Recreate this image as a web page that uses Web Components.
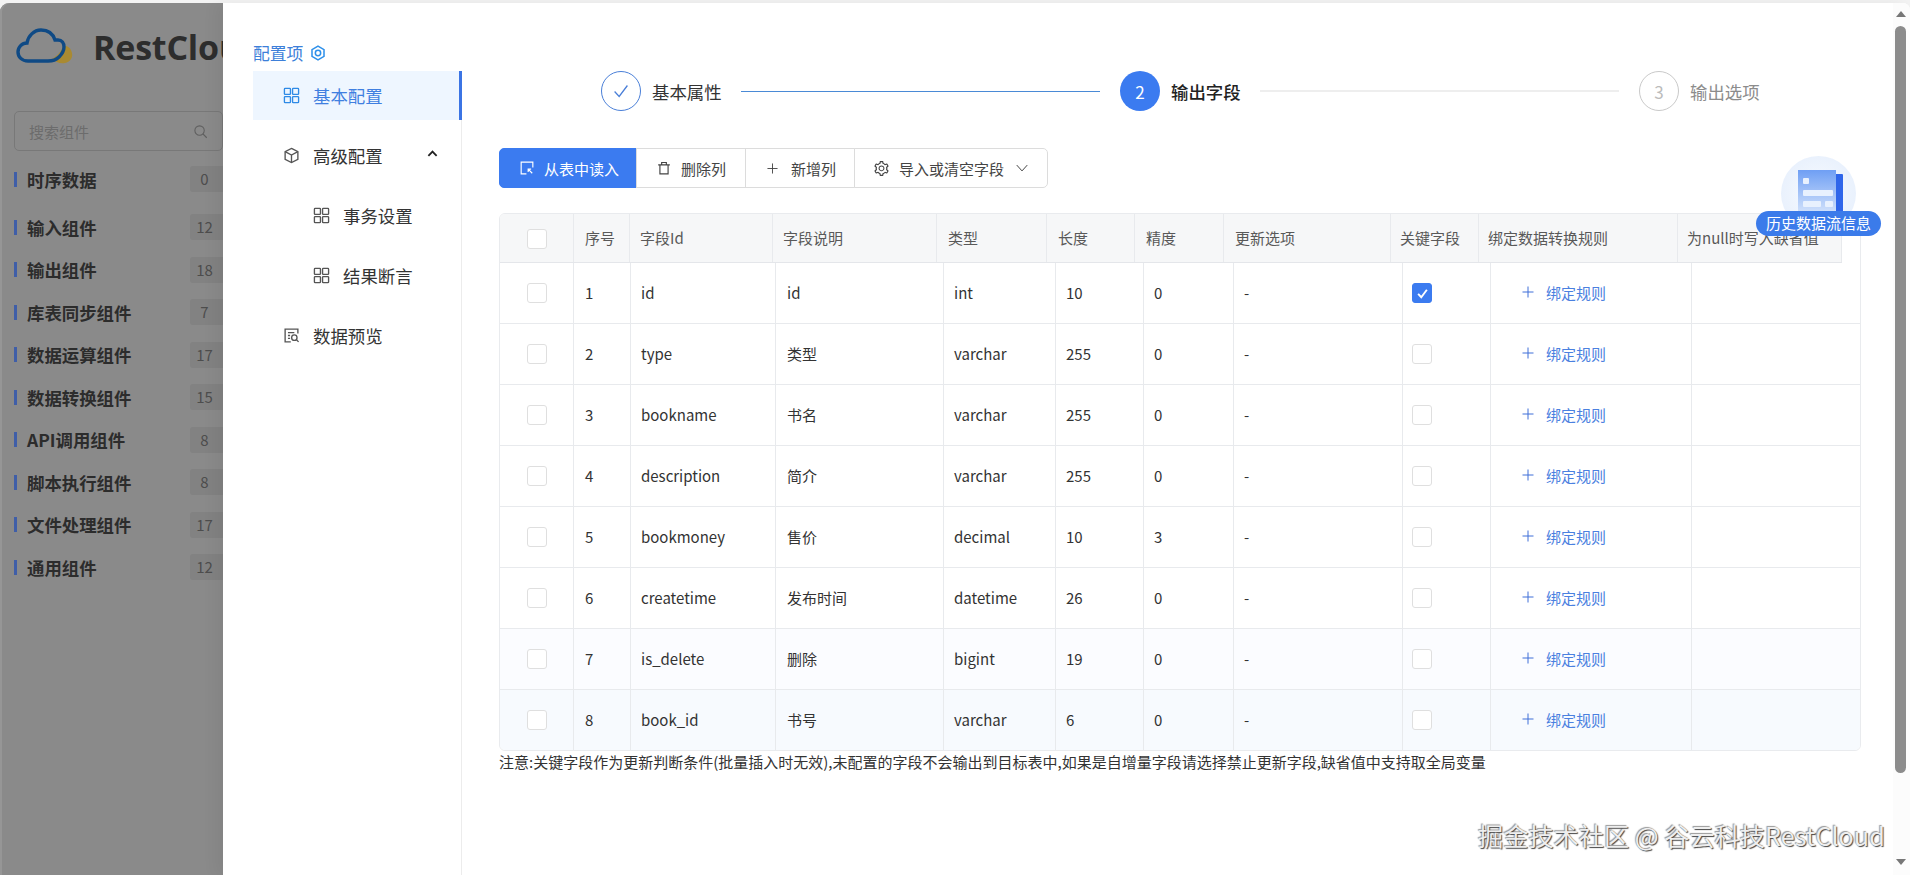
<!DOCTYPE html>
<html lang="zh">
<head>
<meta charset="utf-8">
<title>RestCloud</title>
<style>
  html, body { margin: 0; height: 100%; overflow: hidden; background: #f3f3f3; }
  body { font-family: "Noto Sans CJK SC", sans-serif; color: #333; }
  rc-app { height: 875px; }
</style>
</head>
<body>
<rc-app>
  <rc-sidebar slot="side"></rc-sidebar>
  <rc-drawer slot="main">
    <rc-menu slot="menu"></rc-menu>
    <rc-steps></rc-steps>
    <rc-toolbar></rc-toolbar>
    <rc-field-table></rc-field-table>
    <div style="font-size:15px;line-height:20px;color:#333;margin-left:37px;margin-top:1px;white-space:nowrap">注意:关键字段作为更新判断条件(批量插入时无效),未配置的字段不会输出到目标表中,如果是自增量字段请选择禁止更新字段,缺省值中支持取全局变量</div>
    <rc-scrollbar slot="scroll"></rc-scrollbar>
    <rc-history slot="over"></rc-history>
  </rc-drawer>
</rc-app>

<script>
  // shared icons, all on a 24 box unless the viewBox says otherwise
  function svg(size, body, sw) {
    return `<svg width="${size}" height="${size}" viewBox="0 0 24 24" fill="none" stroke="currentColor" stroke-width="${sw || 1.7}">${body}</svg>`;
  }
  const ICONS = {
    grid: '<rect x="2" y="2" width="8.5" height="8.5" rx="1"/><rect x="13.5" y="2" width="8.5" height="8.5" rx="1"/><rect x="2" y="13.5" width="8.5" height="8.5" rx="1"/><rect x="13.5" y="13.5" width="8.5" height="8.5" rx="1"/>',
    cube: '<path d="M12 2l9 4.600v10.800L12 22l-9-4.600V6.600z"/><path d="M3 6.600l9 4.800 9-4.800M12 11.400V22"/>',
    preview: '<path d="M21 9V3H3v18h8"/><path d="M7 8h9M7 12h3M7 16h3"/><circle cx="16" cy="15" r="3.800"/><path d="M19 18l3 3"/>',
    target: '<path d="M12 1.800l9 5.100v10.200l-9 5.100-9-5.100V6.900z"/><circle cx="12" cy="12" r="4"/>',
    up: '<path d="M3 17l9-9 9 9"/>',
    down: '<path d="M3 7l9 10 9-10"/>',
    check: '<path d="M5 12.500l5 5.500 9-12"/>',
    plus: '<path d="M12 1v22M1 12h22"/>',
    search: '<circle cx="10.500" cy="10.500" r="7.500"/><path d="M16 16l6 6"/>',
    importBox: '<path d="M22 11V2H2v20h9"/><path d="M21 21l-7-7M14 19v-5h5"/>',
    trash: '<path d="M2 6.500h20M8 6.500V2.500h8v4M5 6.500V22h14V6.500"/>'
  };
  const GEAR = '<svg width="15" height="15" viewBox="64 64 896 896" fill="currentColor"><path d="M924.8 625.7l-65.5-56c3.1-19 4.7-38.4 4.7-57.800s-1.600-38.800-4.700-57.800l65.500-56a32.030 32.030 0 0 0 9.300-35.200l-.9-2.600a443.740 443.740 0 0 0-79.700-137.900l-1.800-2.100a32.120 32.120 0 0 0-35.100-9.500l-81.300 28.900c-30-24.600-63.500-44-99.700-57.600l-15.700-85a32.050 32.050 0 0 0-25.800-25.700l-2.700-.5c-52.100-9.400-106.900-9.400-159 0l-2.700.5a32.050 32.050 0 0 0-25.800 25.700l-15.800 85.400a351.860 351.860 0 0 0-99 57.400l-81.900-29.100a32 32 0 0 0-35.100 9.500l-1.800 2.100a446.020 446.020 0 0 0-79.700 137.900l-.9 2.600c-4.500 12.500-.8 26.500 9.300 35.200l66.300 56.600c-3.100 18.800-4.600 38-4.600 57.100 0 19.200 1.500 38.400 4.600 57.100L99 625.500a32.030 32.030 0 0 0-9.300 35.200l.9 2.600c18.100 50.400 44.900 96.900 79.700 137.900l1.800 2.100a32.120 32.120 0 0 0 35.100 9.500l81.900-29.100c29.800 24.500 63.100 43.900 99 57.400l15.800 85.400a32.050 32.050 0 0 0 25.800 25.700l2.700.5a449.400 449.400 0 0 0 159 0l2.700-.5a32.050 32.050 0 0 0 25.800-25.700l15.700-85a350 350 0 0 0 99.700-57.600l81.300 28.900a32 32 0 0 0 35.100-9.500l1.800-2.100c34.800-41.100 61.600-87.500 79.700-137.900l.9-2.600c4.500-12.300.8-26.300-9.300-35zM788.300 465.900c2.500 15.100 3.800 30.600 3.800 46.100s-1.300 31-3.800 46.100l-6.600 40.100 74.700 63.900a370.030 370.030 0 0 1-42.600 73.600L721 702.800l-31.400 25.800c-23.900 19.600-50.500 35-79.300 45.800l-38.100 14.300-17.900 97a377.500 377.500 0 0 1-85 0l-17.900-97.200-37.800-14.500c-28.500-10.800-55-26.200-78.700-45.700l-31.400-25.900-93.400 33.200c-17-22.900-31.200-47.600-42.600-73.600l75.500-64.500-6.500-40c-2.400-14.900-3.700-30.300-3.700-45.500 0-15.300 1.200-30.600 3.700-45.500l6.500-40-75.500-64.500c11.300-26.100 25.600-50.700 42.600-73.600l93.400 33.200 31.400-25.900c23.700-19.500 50.200-34.900 78.700-45.700l37.900-14.300 17.900-97.200c28.100-3.200 56.800-3.200 85 0l17.900 97 38.100 14.300c28.700 10.800 55.400 26.200 79.300 45.800l31.400 25.800 92.800-32.900c17 22.900 31.200 47.600 42.600 73.600L781.800 426l6.500 39.900zM512 326c-97.200 0-176 78.800-176 176s78.800 176 176 176 176-78.800 176-176-78.800-176-176-176zm79.200 255.200A111.600 111.600 0 0 1 512 614c-29.900 0-58-11.700-79.200-32.800A111.600 111.600 0 0 1 400 502c0-29.900 11.700-58 32.800-79.200C454 401.600 482.100 390 512 390c29.900 0 58 11.600 79.200 32.800A111.600 111.600 0 0 1 624 502c0 29.900-11.700 58-32.800 79.200z"/></svg>';

  class RcApp extends HTMLElement {
    constructor() {
      super();
      this.attachShadow({ mode: 'open' }).innerHTML = `
        <style>
          :host { display: flex; flex-direction: column; padding-top: 3px; box-sizing: border-box; width: 1910px; }
          .row { display: flex; flex: 1; min-height: 0; }
          ::slotted([slot=side]) { flex: none; }
          ::slotted([slot=main]) { flex: 1; min-width: 0; }
        </style>
        <div class="row"><slot name="side"></slot><slot name="main"></slot></div>`;
    }
  }

  class RcSidebar extends HTMLElement {
    constructor() {
      super();
      const groups = [['时序数据', 0], ['输入组件', 12], ['输出组件', 18], ['库表同步组件', 7], ['数据运算组件', 17],
        ['数据转换组件', 15], ['API调用组件', 8], ['脚本执行组件', 8], ['文件处理组件', 17], ['通用组件', 12]];
      this.attachShadow({ mode: 'open' }).innerHTML = `
        <style>
          :host { display: block; width: 223px; background: #8a8a8a; border-top-left-radius: 9px; overflow: hidden; box-sizing: border-box; box-shadow: inset 2px 0 0 #969696; }
          .logo { height: 92px; display: flex; align-items: center; gap: 20px; padding: 0 0 5px 16px; box-sizing: border-box; white-space: nowrap; }
          .logo svg { flex: none; }
          .logo span { font: 700 34px/1 "Open Sans", sans-serif; color: #2d2d2d; letter-spacing: -.2px; flex: 1; min-width: 0; overflow: hidden; }
          .search { margin: 16px 0 7px 14px; height: 40px; box-sizing: border-box; border: 1px solid #787878; border-radius: 5px; display: flex; align-items: center; justify-content: space-between; padding: 0 14px; font-size: 15px; color: #6c6c6c; }
          .search svg { color: #5f5f5f; }
          .g { height: 42.500px; display: flex; align-items: center; }
          .search + .g { margin-bottom: 5.500px; }
          .bar { width: 2.500px; height: 15px; margin-left: 14px; background: #3f5ea8; }
          .t { margin-left: 10.500px; font-size: 17.400px; font-weight: 700; color: #2c2c2c; flex: 1; white-space: nowrap; }
          .n { width: 33px; height: 26px; line-height: 26px; text-align: center; background: #828282; color: #4d4d4d; font-size: 15px; border-radius: 3px 0 0 3px; padding-right: 4px; box-sizing: border-box; }
        </style>
        <div class="logo">
          <svg width="57" height="37" viewBox="0 0 57 37" fill="none">
            <path d="M36 31c4 3 8 5 13 4 5-1 8-5 7-10-1-5-5-8-9-7-2 6-6 10-11 13z" fill="#a98a32"/>
            <path d="M12 33C6 33 2 29 2 24c0-5 4-9 9-9 1-7 7-13 14-13 7 0 12 4 14 10 1 0 2 0 3 0 4 0 6 3 6 7 0 4-2 7-5 10-3 3-7 4-11 4z" stroke="#0f4a85" stroke-width="3.400"/>
          </svg>
          <span>RestCloud</span>
        </div>
        <div class="search"><span>搜索组件</span>${svg(15, ICONS.search)}</div>
        ${groups.map(g => `<div class="g"><i class="bar"></i><span class="t">${g[0]}</span><span class="n">${g[1]}</span></div>`).join('')}`;
    }
  }

  class RcDrawer extends HTMLElement {
    constructor() {
      super();
      this.attachShadow({ mode: 'open' }).innerHTML = `
        <style>
          :host { display: flex; background: #fff; position: relative; height: 872px; overflow: hidden; box-shadow: -6px 0 16px rgba(0,0,0,.06); border-top-right-radius: 7px; }
          .content { flex: 1; min-width: 0; }
          .wm { position: absolute; left: 1255px; top: 814px; font-size: 25.200px; line-height: 36px; color: #eeeeee; white-space: nowrap; text-shadow: 1px 1px 1px #444, -1px -1px 1px #999; }
        </style>
        <slot name="menu"></slot>
        <div class="content"><slot></slot></div>
        <slot name="scroll"></slot>
        <slot name="over"></slot>
        <div class="wm">掘金技术社区 @ 谷云科技RestCloud</div>`;
    }
  }

  class RcMenu extends HTMLElement {
    constructor() {
      super();
      const item = (ic, text, cls) => `<div class="i ${cls || ''}">${svg(17, ICONS[ic], 1.900)}<span>${text}</span>${cls === 'open' ? `<b class="ch">${svg(11, ICONS.up, 4)}</b>` : ''}</div>`;
      this.attachShadow({ mode: 'open' }).innerHTML = `
        <style>
          :host { display: block; width: 239px; flex: none; box-sizing: border-box; padding-left: 30px; }
          .h { display: flex; align-items: center; gap: 7px; height: 24px; margin-top: 38px; margin-bottom: 6px; font-size: 16.800px; color: #3d7fd9; }
          .h svg { color: #2e90ea; }
          .list { border-right: 1px solid #ececec; min-height: 810px; }
          .i { height: 49px; margin-bottom: 11px; display: flex; align-items: center; gap: 13px; padding-left: 30px; font-size: 17.400px; color: #333; position: relative; }
          .i svg { color: #555; flex: none; }
          .i.on { background: #eef6ff; color: #3f7fe0; box-shadow: inset -3px 0 0 #3b74e4; margin-right: -1px; }
          .i.on svg { color: #2e8ae6; }
          .i.sub { padding-left: 60px; }
          .ch { position: absolute; right: 23px; top: 17px; line-height: 0; }
          .ch svg { color: #222; }
        </style>
        <div class="h"><span>配置项</span>${svg(16, ICONS.target, 2.300)}</div>
        <div class="list">
          ${item('grid', '基本配置', 'on')}
          ${item('cube', '高级配置', 'open')}
          ${item('grid', '事务设置', 'sub')}
          ${item('grid', '结果断言', 'sub')}
          ${item('preview', '数据预览')}
        </div>`;
    }
  }

  class RcSteps extends HTMLElement {
    constructor() {
      super();
      this.attachShadow({ mode: 'open' }).innerHTML = `
        <style>
          :host { display: flex; align-items: center; height: 40px; margin: 68px 0 0 139px; font-size: 17.400px; }
          .c { width: 40px; height: 40px; box-sizing: border-box; border-radius: 50%; display: flex; align-items: center; justify-content: center; flex: none; font-size: 17px; }
          .t { margin-left: 11px; white-space: nowrap; width: 69px; }
          .l { height: 1px; margin: 0 20px; }
          .done { border: 1px solid #4a7fd8; color: #4a7fd8; }
          .cur { background: #3b7bf0; color: #fff; }
          .todo { border: 1px solid #c9c9c9; color: #bbb; }
        </style>
        <div class="c done">${svg(22, ICONS.check, 1.400)}</div><span class="t" style="color:#333">基本属性</span>
        <i class="l" style="width:359px;background:#4a8ad6"></i>
        <div class="c cur">2</div><span class="t" style="color:#222;font-weight:500">输出字段</span>
        <i class="l" style="width:359px;height:2px;background:#eeeeee"></i>
        <div class="c todo">3</div><span class="t" style="color:#8c8c8c">输出选项</span>`;
    }
  }

  class RcToolbar extends HTMLElement {
    constructor() {
      super();
      this.attachShadow({ mode: 'open' }).innerHTML = `
        <style>
          :host { display: flex; height: 40px; margin: 37px 0 0 37px; font-size: 15px; color: #444; }
          .b { display: flex; align-items: center; box-sizing: border-box; border: 1px solid #dcdcdc; margin-left: -1px; background: #fff; white-space: nowrap; }
          .b svg { flex: none; }
          .p { background: #3b7bf0; border-color: #3b7bf0; color: #fff; width: 138px; gap: 10px; padding-left: 20px; border-radius: 5px 0 0 5px; margin-left: 0; }
          .d { width: 110px; gap: 10px; padding-left: 20px; }
          .n { width: 110px; gap: 13px; padding-left: 21px; }
          .m { width: 194px; gap: 10px; padding-left: 19px; border-radius: 0 5px 5px 0; }
        </style>
        <div class="b p">${svg(14, ICONS.importBox, 2)}<span>从表中读入</span></div>
        <div class="b d">${svg(14, ICONS.trash, 2)}<span>删除列</span></div>
        <div class="b n">${svg(11, ICONS.plus, 2)}<span>新增列</span></div>
        <div class="b m">${GEAR}<span>导入或清空字段</span><span style="display:flex;margin-left:1px">${svg(14, ICONS.down, 1.700)}</span></div>`;
    }
  }

  class RcFieldTable extends HTMLElement {
    constructor() {
      super();
      const heads = ['序号', '字段Id', '字段说明', '类型', '长度', '精度', '更新选项', '关键字段', '绑定数据转换规则', '为null时写入缺省值'];
      const rows = [
        [1, 'id', 'id', 'int', 10, 0, true],
        [2, 'type', '类型', 'varchar', 255, 0],
        [3, 'bookname', '书名', 'varchar', 255, 0],
        [4, 'description', '简介', 'varchar', 255, 0],
        [5, 'bookmoney', '售价', 'decimal', 10, 3],
        [6, 'createtime', '发布时间', 'datetime', 26, 0],
        [7, 'is_delete', '删除', 'bigint', 19, 0],
        [8, 'book_id', '书号', 'varchar', 6, 0]
      ];
      const box = on => `<i class="cb ${on ? 'on' : ''}">${on ? svg(15, ICONS.check, 3) : ''}</i>`;
      this.attachShadow({ mode: 'open' }).innerHTML = `
        <style>
          :host { display: block; width: 1362px; box-sizing: border-box; margin: 25px 0 0 37px; border: 1px solid #e9ebee; border-radius: 6px; font-size: 15px; overflow: hidden; }
          .hd, .r { display: grid; }
          .hd { height: 48px; width: 1342px; grid-template-columns: 74px 56px 143px 164px 110px 88px 89px 167px 88px 199px 164px; background: #f6f7f8; color: #595959; border-bottom: 1px solid #e4e6ea; }
          .r { height: 61px; grid-template-columns: 74px 57px 145px 168px 112px 88px 90px 169px 88px 201px 169px; box-sizing: border-box; border-bottom: 1px solid #e8eaed; color: #333; }
          .r:last-child { border-bottom: 0; height: 60px; }
          .r.t7 { background: #fbfcff; }
          .r.t8 { background: #f7fafe; }
          .hd > div, .r > div { display: flex; align-items: center; padding: 0 0 2px 10px; border-right: 1px solid #e8eaed; white-space: nowrap; overflow: hidden; box-sizing: border-box; min-width: 0; }
          .r > div:last-child { border-right: 0; }
          .hd > div:first-child, .r > div:first-child { justify-content: center; padding: 0; }
          .hd > div:nth-child(2), .hd > div:nth-child(n+5):nth-child(-n+8) { padding-left: 11px; }
          .hd > div:nth-child(n+9) { padding-left: 9px; }
          .hd > div:first-child .cb { margin-top: 2px; }
          .r > div:nth-child(2), .r > div:nth-child(4) { padding-left: 11px; }
          .cb { display: flex; align-items: center; justify-content: center; width: 20px; height: 20px; box-sizing: border-box; border: 1px solid #dfdfdf; border-radius: 3px; background: #fff; flex: none; }
          .r .key { padding: 0 0 0 9px; }
          .cb.on { background: #3b7bf0; border-color: #3b7bf0; color: #fff; }
          .bind { color: #4a80e0; gap: 12px; padding-left: 31px !important; }
          .bind svg { color: #3f6fd8; flex: none; }
        </style>
        <div class="hd"><div>${box()}</div>${heads.map(h => `<div>${h}</div>`).join('')}</div>
        ${rows.map(r => `<div class="r t${r[0]}"><div>${box()}</div>
          <div>${r[0]}</div><div>${r[1]}</div><div>${r[2]}</div><div>${r[3]}</div><div>${r[4]}</div><div>${r[5]}</div><div>-</div>
          <div class="key">${box(r[6])}</div>
          <div class="bind">${svg(12, ICONS.plus, 2)}<span>绑定规则</span></div><div></div></div>`).join('')}`;
    }
  }

  class RcScrollbar extends HTMLElement {
    constructor() {
      super();
      this.attachShadow({ mode: 'open' }).innerHTML = `
        <style>
          :host { display: flex; flex-direction: column; width: 17px; flex: none; box-sizing: border-box; padding-left: 2px; background: #fcfcfc; height: 872px; }
          .a { width: 0; height: 0; border: 5px solid transparent; margin: 8px 0 0 .500px; border-top: 0; border-bottom: 6px solid #777; }
          .th { width: 11px; height: 747px; margin-top: 9px; background: #8c8c8c; border-radius: 6px; }
          .b { width: 0; height: 0; border: 5px solid transparent; border-bottom: 0; border-top: 6px solid #777; margin: 86px 0 0 .500px; }
        </style>
        <i class="a"></i><div class="th"></div><i class="b"></i>`;
    }
  }

  class RcHistory extends HTMLElement {
    constructor() {
      super();
      this.attachShadow({ mode: 'open' }).innerHTML = `
        <style>
          :host { position: absolute; left: 1533px; top: 153px; width: 125px; height: 80px; display: block; }
          .disc { position: absolute; left: 25px; top: 0; width: 75px; height: 75px; border-radius: 50%; background: radial-gradient(circle, #f2f7fe 30%, #e3edfc 100%); }
          svg { position: absolute; left: 42px; top: 14px; }
          .pill { position: absolute; left: 0; top: 55px; width: 125px; height: 25px; line-height: 24px; border-radius: 13px; background: #3b7bea; color: #fff; font-size: 15px; text-align: center; white-space: nowrap; }
        </style>
        <div class="disc"></div>
        <svg width="45" height="42" viewBox="0 0 45 42">
          <defs><linearGradient id="d" x1="0" y1="0" x2="0" y2="1"><stop offset="0" stop-color="#6f9ff4"/><stop offset="1" stop-color="#cfe0fb"/></linearGradient></defs>
          <rect x="37" y="4" width="8" height="38" rx="1" fill="#2f66ea"/>
          <rect x="0" y="0" width="38" height="42" fill="url(#d)"/>
          <rect x="5" y="8" width="6" height="6" rx="1" fill="#e8f1fe"/>
          <rect x="5" y="20" width="30" height="6" rx="1" fill="#e8f1fe"/>
          <rect x="5" y="31" width="18" height="6" rx="1" fill="#e8f1fe"/>
          <rect x="27" y="31" width="8" height="6" rx="1" fill="#e8f1fe"/>
        </svg>
        <div class="pill">历史数据流信息</div>`;
    }
  }

  customElements.define('rc-app', RcApp);
  customElements.define('rc-sidebar', RcSidebar);
  customElements.define('rc-drawer', RcDrawer);
  customElements.define('rc-menu', RcMenu);
  customElements.define('rc-steps', RcSteps);
  customElements.define('rc-toolbar', RcToolbar);
  customElements.define('rc-field-table', RcFieldTable);
  customElements.define('rc-scrollbar', RcScrollbar);
  customElements.define('rc-history', RcHistory);
</script>
</body>
</html>
